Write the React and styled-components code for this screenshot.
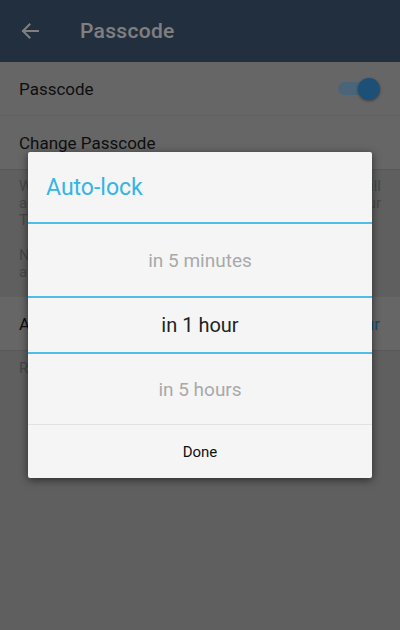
import React from 'react'
import styled, { createGlobalStyle } from 'styled-components'

const GlobalStyle = createGlobalStyle`
  html, body {
    margin: 0;
    padding: 0;
    background: #bdbdbd;
  }
  * {
    box-sizing: border-box;
  }
  body {
    font-family: Roboto, "Noto Sans", "Liberation Sans", sans-serif;
  }
`

const Screen = styled.div`
  position: relative;
  width: 400px;
  height: 630px;
  overflow: hidden;
  background: #bfbfbf;
  display: flex;
  flex-direction: column;
`

const Header = styled.header`
  height: 62px;
  flex-shrink: 0;
  background: #455f7f;
  display: flex;
  align-items: center;
  padding-left: 21px;
  gap: 41px;
`

const BackButton = styled.div`
  width: 18px;
  height: 18px;
  display: flex;
  align-items: center;
  justify-content: center;
`

const HeaderTitle = styled.h1`
  margin: 0;
  font-size: 21px;
  font-weight: 500;
  color: #ffffff;
  letter-spacing: 0.3px;
`

const Row = styled.div`
  height: 54px;
  flex-shrink: 0;
  background: #cccccc;
  display: flex;
  align-items: center;
  justify-content: space-between;
  padding: 0 20px 0 19px;
  border-bottom: 1px solid ${(p) => (p.last ? '#b0b0b0' : '#c0c0c0')};
`

const RowLabel = styled.span`
  font-size: 17px;
  color: #1c1c1c;
`

const RowValue = styled.span`
  font-size: 17px;
  color: #3494e0;
`

const Toggle = styled.div`
  position: relative;
  width: 42px;
  height: 22px;
  display: flex;
  align-items: center;
`

const Track = styled.div`
  width: 34px;
  height: 13px;
  border-radius: 7px;
  background: #94c8f0;
`

const Knob = styled.div`
  position: absolute;
  right: 0;
  top: 0;
  width: 22px;
  height: 22px;
  border-radius: 50%;
  background: #3aa0ee;
  box-shadow: 0 1px 3px rgba(0, 0, 0, 0.4);
`

const Info = styled.div`
  flex-shrink: 0;
  background: #bebebe;
  padding: ${(p) => p.pad || '8px 19px 16px'};
  font-size: 15px;
  line-height: 17px;
  color: #8f8f8f;
  display: flex;
  flex-direction: column;
  gap: 18px;
`

const Para = styled.p`
  margin: 0;
`

const Line = styled.span`
  display: block;
  white-space: nowrap;
  text-align: ${(p) => (p.justified ? 'justify' : 'left')};
  text-align-last: ${(p) => (p.justified ? 'justify' : 'left')};
`

const Backdrop = styled.div`
  position: absolute;
  inset: 0;
  background: rgba(0, 0, 0, 0.5);
  display: flex;
  justify-content: center;
  align-items: flex-start;
  padding-top: 152px;
`

const Dialog = styled.div`
  width: 344px;
  background: #f5f5f5;
  border-radius: 2px;
  box-shadow: 0 2px 8px rgba(0, 0, 0, 0.55);
  display: flex;
  flex-direction: column;
`

const DialogTitle = styled.div`
  height: 72px;
  padding: 0 18px;
  display: flex;
  align-items: center;
  font-size: 23px;
  color: #33b5e5;
  border-bottom: 2px solid #4fbde9;
`

const Option = styled.div`
  height: ${(p) => p.h}px;
  display: flex;
  align-items: center;
  justify-content: center;
  font-size: ${(p) => (p.selected ? 20 : 19)}px;
  color: ${(p) => (p.selected ? '#222222' : '#a9a9a9')};
  border-bottom: ${(p) => (p.divider ? '2px solid #4fbde9' : 'none')};
`

const DoneButton = styled.div`
  height: 54px;
  display: flex;
  align-items: center;
  justify-content: center;
  font-size: 15px;
  color: #111111;
  border-top: 1px solid #e2e2e2;
`

function BackArrow() {
  return (
    <svg width="18" height="16" viewBox="0 0 18 16" fill="none">
      <path
        d="M17 8H2M8.5 1.5L2 8l6.5 6.5"
        stroke="#ffffff"
        strokeWidth="2"
        strokeLinecap="square"
      />
    </svg>
  )
}

export default function App() {
  return (
    <>
      <GlobalStyle />
      <Screen>
        <Header>
          <BackButton>
            <BackArrow />
          </BackButton>
          <HeaderTitle>Passcode</HeaderTitle>
        </Header>
        <Row>
          <RowLabel>Passcode</RowLabel>
          <Toggle>
            <Track />
            <Knob />
          </Toggle>
        </Row>
        <Row last>
          <RowLabel>Change Passcode</RowLabel>
        </Row>
        <Info>
          <Para>
            <Line justified>When you set a passcode, a lock icon will</Line>
            <Line justified>appear on the chats page. Tap it to lock your</Line>
            <Line>Telegram app.</Line>
          </Para>
          <Para>
            <Line>Note: if you forget it, you'll need to delete</Line>
            <Line>and reinstall the app.</Line>
          </Para>
        </Info>
        <Row last>
          <RowLabel>Auto-lock</RowLabel>
          <RowValue>in 1 hour</RowValue>
        </Row>
        <Info pad="9px 19px">
          <Para>Require passcode if away for a time.</Para>
        </Info>
        <Backdrop>
          <Dialog>
            <DialogTitle>Auto-lock</DialogTitle>
            <Option h={74} divider>in 5 minutes</Option>
            <Option h={56} divider selected>in 1 hour</Option>
            <Option h={70}>in 5 hours</Option>
            <DoneButton>Done</DoneButton>
          </Dialog>
        </Backdrop>
      </Screen>
    </>
  )
}
